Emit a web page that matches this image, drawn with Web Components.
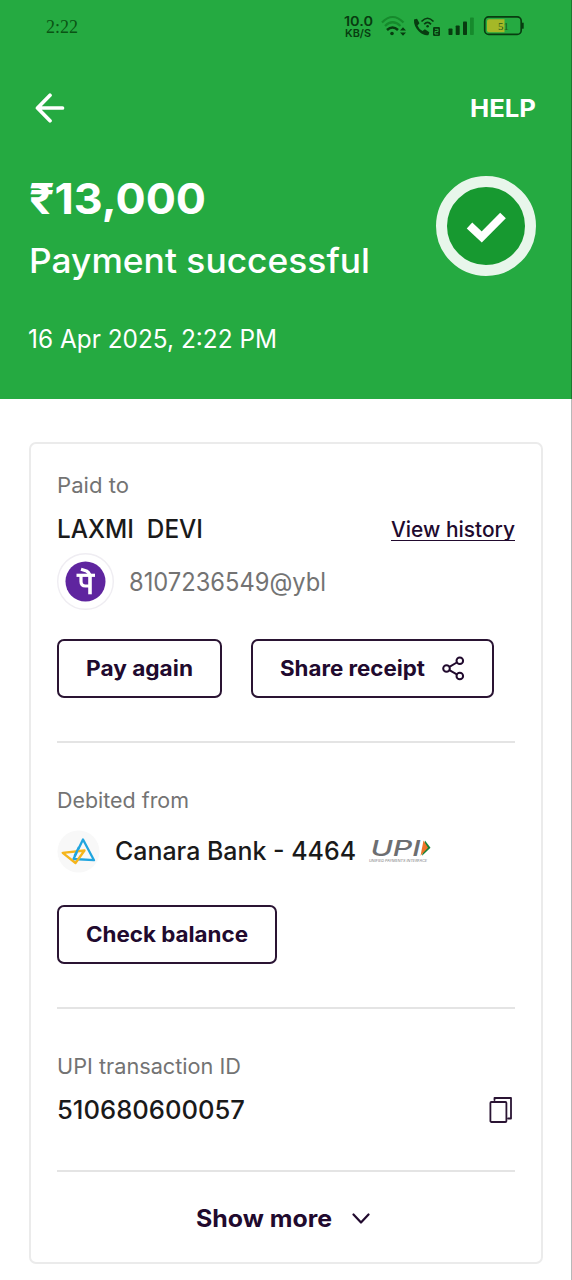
<!DOCTYPE html>
<html lang="en">
<head>
<meta charset="utf-8">
<title>Payment successful</title>
<style>
html,body{margin:0;background:#fff}
body{font-family:Inter,"Noto Sans",sans-serif;overflow:hidden}
</style>
</head>
<body>
<pay-screen></pay-screen>
<script>
const define = (name, html, ready) => customElements.define(name, class extends HTMLElement {
  constructor() {
    super();
    const t = document.createElement('template');
    t.innerHTML = html;
    this.attachShadow({mode: 'open'}).appendChild(t.content.cloneNode(true));
  }
  connectedCallback() { if (ready) ready.call(this); }
});

/* One line of text, widened so that it takes the given width. */
define('fit-line', `<style>
:host{display:block;flex:none;white-space:pre;line-height:1}
span{display:inline-block;white-space:pre;transform-origin:0 50%;vertical-align:top}
</style><span><slot></slot></span>`, function () {
  const target = +this.getAttribute('w');
  const size = this.getAttribute('size');
  this.style.fontSize = size + 'px';
  this.style.fontWeight = this.getAttribute('weight') || 400;
  this.style.width = target + 'px';
  const span = this.shadowRoot.querySelector('span');
  const ratio = target / span.getBoundingClientRect().width;
  span.style.transform = 'scaleX(' + ratio.toFixed(4) + ')';
});

define('status-bar', `<style>
:host{display:flex;height:54px;box-sizing:border-box;padding:0 48px 0 46px;color:#083c10;align-items:center;justify-content:space-between}
.time{font-family:"Liberation Serif",serif;color:#0a5414;margin-bottom:2px}
.right{display:flex;align-items:center}
.rate{display:flex;flex-direction:column;align-items:center;gap:1px;margin-right:8px;width:30px;padding-top:1px}
svg{display:block;flex:none}
</style>
<fit-line class="time" w="32" size="19">2:22</fit-line>
<div class="right">
<div class="rate"><fit-line w="29" size="13" weight="600">10.0</fit-line><fit-line w="26" size="10.5" weight="600">KB/S</fit-line></div>
<svg width="143" height="28" viewBox="381 12 143 28" fill="none">
<g stroke="#168a2c" stroke-width="2.2"><path d="M382 21.500Q392.500 10.500 403.500 21.500"/><path d="M385 25Q392.500 17.500 400.500 25"/></g>
<path d="M387 29Q392.500 24 398 29" stroke="#083c10" stroke-width="2.600"/>
<circle cx="392" cy="32.500" r="1.800" fill="#083c10"/>
<path d="M400 29.500l3-3.300 3 3.300zM400 31.500l3 3.300 3-3.300z" fill="#083c10"/>
<path d="M414 18.500l3-.8 2.500 4.500-2 2.200q1.600 4 5 5.600l2.400-1.700 4.400 3-.8 2.800q-4.500 1-9.500-3.600-5.500-5.500-5-12z" fill="#083c10"/>
<g stroke="#083c10" stroke-width="1.700"><path d="M421.500 20.500Q427.500 14 433.500 20.500"/><path d="M424.200 23.300Q427.500 19.500 431 23.300"/></g>
<circle cx="427.600" cy="25.300" r="1.300" fill="#083c10"/>
<rect x="433" y="26" width="7" height="9" rx="1.200" fill="#083c10"/>
<path d="M435 28.300h3v2.200h-3v2.500h3.200" stroke="#23a93f" stroke-width="1"/>
<g fill="#083c10"><rect x="448.500" y="27.500" width="4" height="6.500" rx=".8"/><rect x="455.700" y="24.500" width="4" height="9.500" rx=".8"/><rect x="463" y="20.500" width="4" height="13.500" rx=".8"/></g>
<rect x="470" y="16.500" width="3.800" height="17.500" rx=".8" fill="#168a2c"/>
<rect x="484.700" y="15.900" width="36.500" height="17.500" rx="4" stroke="#083c10" stroke-width="1.700"/>
<path d="M489 18.200h15.500v13H489q-2 0-2-2v-9q0-2 2-2z" fill="#a5b827"/>
<path d="M522.700 21.700v6" stroke="#083c10" stroke-width="2"/>
<text x="498" y="28.500" font-family="Liberation Serif,serif" font-size="11" fill="#245a18">51</text>
</svg>
</div>`);

define('success-badge', `<style>:host{display:block}svg{display:block}</style>
<svg width="100" height="100" viewBox="0 0 100 100"><circle cx="50" cy="50" r="44.500" fill="#179930" stroke="#e8f6eb" stroke-width="11"/><path d="M33.500 49.500L45.700 61 67 39.500" fill="none" stroke="#fff" stroke-width="8"/></svg>`);

define('pay-header', `<style>
:host{display:block;height:398.500px;background:#25aa41;color:#fff;overflow:hidden}
.nav{display:flex;align-items:center;justify-content:space-between;height:54px;margin-top:27px;padding:0 36px 0 35px}
.nav fit-line{margin-top:2px}
.hero{display:flex;justify-content:space-between;padding:0 36px 0 29px;margin-top:41px}
.copy{display:flex;flex-direction:column;align-items:flex-start;padding-top:1px}
.title{margin-top:24px}.date{margin-top:49px;margin-left:-1px}
svg{display:block}
</style>
<status-bar></status-bar>
<div class="nav"><svg width="30" height="30" viewBox="0 0 30 30" fill="none" stroke="#fff" stroke-width="3.700" stroke-linecap="round" stroke-linejoin="round"><path d="M27.500 15H2.500M15 2.300L2.500 15l12.500 12.700"/></svg>
<fit-line w="66" size="24" weight="700">HELP</fit-line></div>
<div class="hero"><div class="copy">
<fit-line w="177" size="43" weight="700">₹13,000</fit-line>
<fit-line class="title" w="341" size="34" weight="500">Payment successful</fit-line>
<fit-line class="date" w="249" size="25">16 Apr 2025, 2:22 PM</fit-line>
</div><success-badge></success-badge></div>`);

define('pay-button', `<style>
:host{display:inline-flex;box-sizing:border-box;height:59px;border:2px solid #2a1433;border-radius:7px;align-items:center;padding:0 27px;gap:17px;color:#210a2e}
::slotted(svg){display:block;flex:none}
</style><slot></slot>`);

define('text-row', `<style>
:host{display:flex;align-items:center;justify-content:space-between;height:44px}
</style><slot></slot>`);

define('rule-line', `<style>:host{display:block;height:2px;background:#e4e4e4}</style>`);

define('payee-logo', `<style>:host{display:block;flex:none}svg{display:block}</style>
<svg width="57" height="57" viewBox="0 0 57 57" fill="none"><circle cx="28.500" cy="28.500" r="27.800" fill="#fff" stroke="#efedf2" stroke-width="1.400"/><circle cx="28.500" cy="28.500" r="20" fill="#5f259f"/>
<g stroke="#fff" stroke-width="3.200" stroke-linejoin="round"><path d="M19.500 22.300h18.500"/><path d="M24 16.200L29.500 18Q31.500 19 33 22"/><path d="M24 22v6.500q0 4.500 4.500 4.500h4"/><path d="M33 22v19.300" stroke-width="3.600"/></g></svg>`);

define('bank-logo', `<style>:host{display:block;flex:none}svg{display:block}</style>
<svg width="43" height="43" viewBox="0 0 43 43" fill="none" stroke-width="2.300" stroke-linejoin="round"><circle cx="21.500" cy="21.500" r="21" fill="#f8f8f8"/>
<path d="M26 9.500L37 30.200 16.500 29z" stroke="#20a5df"/><path d="M5.700 22.800L27.500 20.500 18.500 33z" stroke="#f5b51b"/><path d="M22 17l-4.500 9" stroke="#20a5df"/></svg>`);

define('upi-logo', `<style>:host{display:block;flex:none}svg{display:block;overflow:visible}</style>
<svg width="63" height="26" viewBox="0 0 63 26">
<text x="1.500" y="18" font-family="Inter,sans-serif" font-style="italic" font-weight="500" font-size="21.500" textLength="50" lengthAdjust="spacingAndGlyphs" fill="#6d6e71">UPI</text>
<path d="M56 2.500l5.500 7.300-8.500 8z" fill="#12813a"/><path d="M54.500 2.500l4.500 7.300-7.500 8z" fill="#ec7428"/>
<text x="0" y="24" font-family="Inter,sans-serif" font-style="italic" font-size="3.800" textLength="58" lengthAdjust="spacingAndGlyphs" fill="#77787b">UNIFIED PAYMENTS INTERFACE</text></svg>`);

define('receipt-card', `<style>
:host{display:block;box-sizing:border-box;margin:43.500px 29px 0;height:822px;border:2px solid #ebebeb;border-radius:7px;padding:19px 26px 0;color:#1a1a1a}
.muted{color:#737373}
.link{color:#210a2e;border-bottom:1.500px solid #210a2e;margin-top:1px}
.vpa{display:flex;align-items:center;gap:15px;height:57px;margin-top:2px}
.vpa fit-line{padding-top:2px}
.actions{display:flex;gap:29px;margin-top:29px}
.r1{margin-top:43px}
.label2{margin-top:35px}
.bank{display:flex;align-items:center;height:56px;margin-top:1px}
.bank fit-line{margin:0 13px 0 15px}
.more{display:flex;align-items:center;height:44px;margin-top:25px;padding-left:139px;gap:20px;color:#210a2e}
svg{display:block}
</style>
<text-row><fit-line class="muted" w="72" size="21">Paid to</fit-line></text-row>
<text-row><fit-line w="146" size="25" weight="500">LAXMI  DEVI</fit-line><fit-line class="link" w="124" size="21" weight="500">View history</fit-line></text-row>
<div class="vpa"><payee-logo></payee-logo><fit-line class="muted" w="197" size="25">8107236549@ybl</fit-line></div>
<div class="actions"><pay-button><fit-line w="107" size="21" weight="700">Pay again</fit-line></pay-button>
<pay-button><fit-line w="145" size="21" weight="700">Share receipt</fit-line><svg width="23" height="25" viewBox="0 0 23 25" fill="none" stroke="#210a2e" stroke-width="2"><circle cx="4.500" cy="12.500" r="3.300"/><circle cx="17.800" cy="4.800" r="3.300"/><circle cx="17.800" cy="20" r="3.300"/><path d="M7.400 10.800l7.400-4.300M7.400 14.200l7.400 4.200"/></svg></pay-button></div>
<rule-line class="r1"></rule-line>
<text-row class="label2"><fit-line class="muted" w="132" size="21">Debited from</fit-line></text-row>
<div class="bank"><bank-logo></bank-logo><fit-line w="241" size="25" weight="500">Canara Bank - 4464</fit-line><upi-logo></upi-logo></div>
<div class="actions" style="margin-top:26px"><pay-button><fit-line w="162" size="21" weight="700">Check balance</fit-line></pay-button></div>
<rule-line class="r1"></rule-line>
<text-row class="label2"><fit-line class="muted" w="184" size="21">UPI transaction ID</fit-line></text-row>
<text-row><fit-line w="188" size="25" weight="500">510680600057</fit-line><svg width="26" height="28" viewBox="0 0 26 28" fill="none" stroke="#2a1433" stroke-width="1.800" stroke-linejoin="round"><rect x="1.400" y="6" width="16" height="20" rx="1"/><path d="M5.500 4V2h16.500v20.500h-3" stroke-linecap="round"/></svg></text-row>
<rule-line style="margin-top:38px"></rule-line>
<div class="more"><fit-line w="136" size="24" weight="700">Show more</fit-line><svg width="18" height="12" viewBox="0 0 18 12" fill="none" stroke="#210a2e" stroke-width="2.200" stroke-linecap="round" stroke-linejoin="round"><path d="M1.500 1.500L9 9.500l7.500-8"/></svg></div>`);

define('pay-screen', `<style>
:host{display:block;position:relative;width:572px;height:1280px;background:#fff;overflow:hidden}
:host::after{content:"";position:absolute;right:0;top:0;width:1px;height:1280px;background:rgba(0,0,0,.28)}
</style><pay-header></pay-header><receipt-card></receipt-card>`);
</script>
</body>
</html>
